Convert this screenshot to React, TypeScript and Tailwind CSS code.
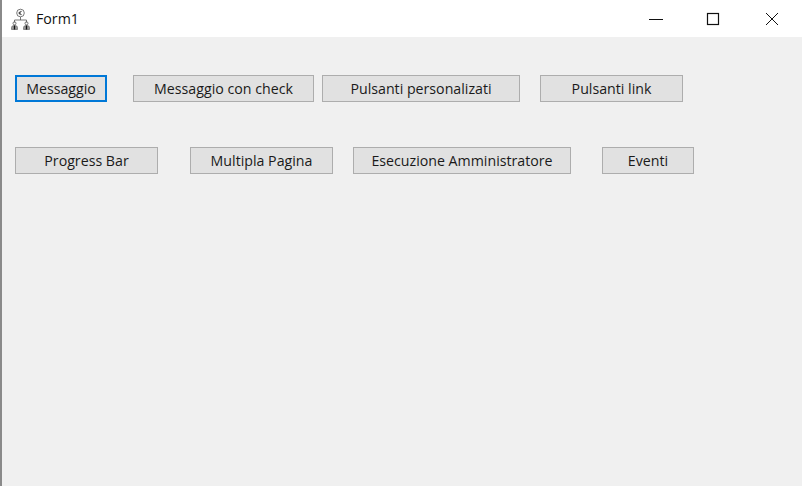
import React from "react";

const btn =
  "h-[27px] shrink-0 flex items-center justify-center bg-[#e1e1e1] text-[14.2px] text-[#1a1a1a]";
const plain = "border border-[#adadad]";

const AppIcon = () => (
  <svg width="22" height="22" viewBox="0 0 22 22" fill="none" stroke="#555" strokeWidth="0.8">
    <circle cx="10.5" cy="5" r="3.8" />
    <path d="M11.8 3.4q-2.2-.8-2.4 1.6t2.4 1.6M8.6 4.5h2.2M8.6 5.5h2.2" strokeWidth="0.7" stroke="#333" />
    <path d="M10.5 9v3M4.5 14.5v-2.5h12v2.5" />
    <circle cx="4.5" cy="15.3" r="1.5" />
    <circle cx="16.5" cy="15.3" r="1.5" />
    <path d="M1.5 21.5v-2q0-2 3-2t3 2v2zM13.5 21.5v-2q0-2 3-2t3 2v2z" fill="#999" stroke="#777" />
    <path d="M4.5 17.5v4M16.5 17.5v4" stroke="#111" strokeWidth="1.3" />
  </svg>
);

const App = () => {
  return (
    <div
      className="relative w-[802px] h-[486px] overflow-hidden flex flex-col bg-[#f0f0f0] border-l-2 border-[#8a8a8a]"
      style={{ fontFamily: '"Open Sans", "Noto Sans", sans-serif' }}
    >
      {/* ticks left by the window behind */}
      <div className="absolute -left-[2px] top-[45px] w-[2px] h-[1px] bg-[#222]" />
      <div className="absolute -left-[2px] top-[384px] w-[2px] h-[1px] bg-[#222]" />

      {/* title bar */}
      <div className="h-[37px] shrink-0 bg-white flex items-center pl-[8px]">
        <AppIcon />
        <span className="ml-[4px] text-[14.2px] text-[#111]">Form1</span>
        <div className="ml-auto mr-[1px] flex items-center">
          <div className="w-[54px] flex justify-center">
            <svg width="14" height="14" viewBox="0 0 14 14" stroke="#111" strokeWidth="1">
              <path d="M0 7.5h14" />
            </svg>
          </div>
          <div className="w-[60px] flex justify-center">
            <svg width="14" height="14" viewBox="0 0 14 14" fill="none" stroke="#111" strokeWidth="1.2">
              <rect x="1.5" y="1.5" width="11" height="11" />
            </svg>
          </div>
          <div className="w-[58px] flex justify-center">
            <svg width="14" height="14" viewBox="0 0 14 14" stroke="#111" strokeWidth="1">
              <path d="M1 1l12 12M13 1L1 13" />
            </svg>
          </div>
        </div>
      </div>

      {/* form body */}
      <div className="pl-[13px] pt-[38px] flex flex-col gap-[45px]">
        <div className="flex">
          <button className={`${btn} w-[92px] border-2 border-[#0078d7]`}>Messaggio</button>
          <button className={`${btn} ${plain} w-[181px] ml-[26px]`}>Messaggio con check</button>
          <button className={`${btn} ${plain} w-[198px] ml-[8px]`}>Pulsanti personalizati</button>
          <button className={`${btn} ${plain} w-[143px] ml-[20px]`}>Pulsanti link</button>
        </div>
        <div className="flex">
          <button className={`${btn} ${plain} w-[143px]`}>Progress Bar</button>
          <button className={`${btn} ${plain} w-[143px] ml-[32px]`}>Multipla Pagina</button>
          <button className={`${btn} ${plain} w-[218px] ml-[20px]`}>Esecuzione Amministratore</button>
          <button className={`${btn} ${plain} w-[92px] ml-[31px]`}>Eventi</button>
        </div>
      </div>
    </div>
  );
};

export default App;
